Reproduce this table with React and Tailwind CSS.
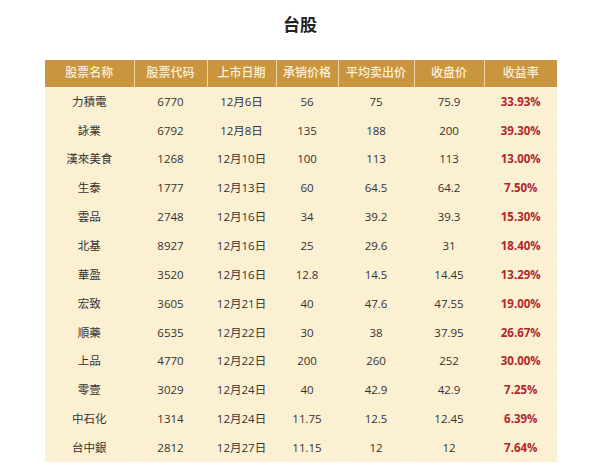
import React from "react";

const rows = [
  ["力積電", "6770", "12月6日", "56", "75", "75.9", "33.93%"],
  ["詠業", "6792", "12月8日", "135", "188", "200", "39.30%"],
  ["漢來美食", "1268", "12月10日", "100", "113", "113", "13.00%"],
  ["生泰", "1777", "12月13日", "60", "64.5", "64.2", "7.50%"],
  ["雲品", "2748", "12月16日", "34", "39.2", "39.3", "15.30%"],
  ["北基", "8927", "12月16日", "25", "29.6", "31", "18.40%"],
  ["華盈", "3520", "12月16日", "12.8", "14.5", "14.45", "13.29%"],
  ["宏致", "3605", "12月21日", "40", "47.6", "47.55", "19.00%"],
  ["順藥", "6535", "12月22日", "30", "38", "37.95", "26.67%"],
  ["上品", "4770", "12月22日", "200", "260", "252", "30.00%"],
  ["零壹", "3029", "12月24日", "40", "42.9", "42.9", "7.25%"],
  ["中石化", "1314", "12月24日", "11.75", "12.5", "12.45", "6.39%"],
  ["台中銀", "2812", "12月27日", "11.15", "12", "12", "7.64%"],
];

const heads = ["股票名称", "股票代码", "上市日期", "承销价格", "平均卖出价", "收盘价", "收益率"];
const widths = ["w-[89px]", "w-[73px]", "w-[69px]", "w-[62px]", "w-[76px]", "w-[70px]", "w-[73px]"];

export default function App() {
  return (
    <div className="w-[600px] h-[472px] bg-white overflow-hidden font-['Open_Sans','Noto_Sans_CJK_SC',sans-serif]">
      <h1 className="pt-[14px] h-[60px] text-center text-[17px] font-bold text-[#222] leading-[22px]">台股</h1>
      <div className="ml-[45px] w-[512px]">
        <table className="w-full border-collapse table-fixed">
          <thead>
            <tr className="bg-[#c9963f] h-[27px]">
              {heads.map((h, i) => (
                <th key={h} className={"p-0 text-[12px] font-medium text-[#fdf1dc] border-x border-[#f0d6a4] first:border-l-0 last:border-r-0 " + widths[i]}>{h}</th>
              ))}
            </tr>
          </thead>
          <tbody className="bg-[#fcf0d3]">
            {rows.map(r => (
              <tr key={r[0]} className="h-[28.85px] border-t border-[#fdf4e0]">
                {r.map((c, i) => (
                  <td key={i} className={"p-0 text-center text-[11.5px] border-x border-[#fdf4e0] first:border-l-0 last:border-r-0 " + (i === 6 ? "font-bold text-[#b3262b]" : "text-[#333]")}>{c}</td>
                ))}
              </tr>
            ))}
          </tbody>
        </table>
      </div>
    </div>
  );
}
